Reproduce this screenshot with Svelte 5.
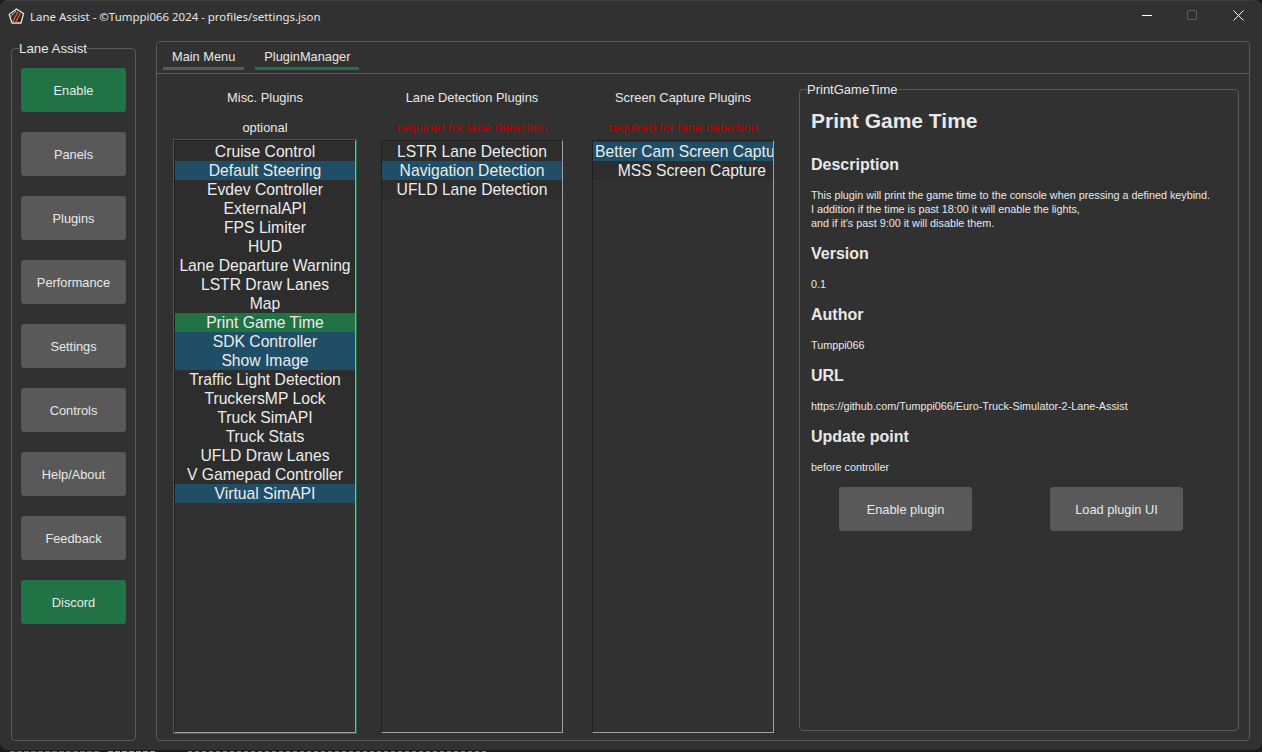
<script>
    const menu = ["Panels", "Plugins", "Performance", "Settings", "Controls", "Help/About", "Feedback"];

    const columns = [
        {
            title: "Misc. Plugins",
            note: "optional",
            focused: true,
            items: [
                ["Cruise Control"], ["Default Steering", "on"], ["Evdev Controller"], ["ExternalAPI"],
                ["FPS Limiter"], ["HUD"], ["Lane Departure Warning"], ["LSTR Draw Lanes"], ["Map"],
                ["Print Game Time", "sel"], ["SDK Controller", "on"], ["Show Image", "on"],
                ["Traffic Light Detection"], ["TruckersMP Lock"], ["Truck SimAPI"], ["Truck Stats"],
                ["UFLD Draw Lanes"], ["V Gamepad Controller"], ["Virtual SimAPI", "on"]
            ]
        },
        {
            title: "Lane Detection Plugins",
            note: "required for lane detection",
            required: true,
            items: [["LSTR Lane Detection"], ["Navigation Detection", "on"], ["UFLD Lane Detection"]]
        },
        {
            title: "Screen Capture Plugins",
            note: "required for lane detection",
            required: true,
            items: [["Better Cam Screen Capture", "on"], ["MSS Screen Capture"]]
        }
    ];

    const info = [
        ["Version", "0.1"],
        ["Author", "Tumppi066"],
        ["URL", "https://github.com/Tumppi066/Euro-Truck-Simulator-2-Lane-Assist"],
        ["Update point", "before controller"]
    ];
</script>

<div class="window">
    <header class="titlebar">
        <svg class="logo" width="17" height="17" viewBox="0 0 17 17">
            <path d="M8.5 1 15.5 5.5 13 15 4 15 1.2 6.5Z" fill="#262626" stroke="#e4e4e4" stroke-width="1.3" />
            <path d="M4.5 14.5 10 3.5M7.5 14.5 12.5 5" stroke="#d4602c" stroke-width="1.4" fill="none" />
            <path d="M2.5 9 8 3" stroke="#bdbdbd" stroke-width="1" fill="none" />
        </svg>
        <span class="title">Lane Assist - ©Tumppi066 2024 - profiles/settings.json</span>
        <div class="controls">
            <span class="min"></span>
            <span class="max"></span>
            <svg class="close" width="11" height="11" viewBox="0 0 11 11">
                <path d="M.5.5 10.5 10.5M10.5.5.5 10.5" stroke="#fff" stroke-width="1" fill="none" />
            </svg>
        </div>
    </header>

    <div class="body">
        <fieldset class="sidebar">
            <legend>Lane Assist</legend>
            <button class="btn green">Enable</button>
            {#each menu as m}
                <button class="btn">{m}</button>
            {/each}
            <button class="btn green">Discord</button>
        </fieldset>

        <section class="notebook">
            <nav class="tabs">
                <div class="tab">Main Menu</div>
                <div class="tab active">PluginManager</div>
            </nav>
            <div class="page">
                {#each columns as col}
                    <div class="column">
                        <div class="col-title">{col.title}</div>
                        <div class="col-note" class:required={col.required}>{col.note}</div>
                        <div class="list" class:focused={col.focused}>
                            <ul>
                                {#each col.items as [label, state]}
                                    <li class={state}>{label}</li>
                                {/each}
                            </ul>
                        </div>
                    </div>
                {/each}

                <fieldset class="details">
                    <legend>PrintGameTime</legend>
                    <h1>Print Game Time</h1>
                    <h2>Description</h2>
                    <p>This plugin will print the game time to the console when pressing a defined keybind.<br />I addition if the time is past 18:00 it will enable the lights,<br />and if it's past 9:00 it will disable them.</p>
                    {#each info as [head, line]}
                        <h2>{head}</h2>
                        <p>{line}</p>
                    {/each}
                    <div class="actions">
                        <button class="btn wide">Enable plugin</button>
                        <button class="btn wide">Load plugin UI</button>
                    </div>
                </fieldset>
            </div>
        </section>
    </div>
</div>

<!-- the terminal behind the window shows through below it -->
<div class="behind">
    <span class="teal"></span>
    <span class="olive"></span>
    <span class="grey"></span>
</div>

<style>
    :global(body) {
        margin: 0;
        background: #1c1c1c;
        overflow: hidden;
    }

    .window {
        box-sizing: border-box;
        width: 1262px;
        height: 750px;
        background: #313131;
        border-top: 1px solid #3e3e3e;
        color: #e8e8e8;
        font-family: "Liberation Sans", Arial, sans-serif;
        display: flex;
        flex-direction: column;
        border-radius: 8px 8px 8px 8px;
    }

    .titlebar {
        height: 30px;
        display: flex;
        align-items: center;
        padding-left: 8px;
        flex: none;
    }

    .title {
        margin-left: 5px;
        font-family: "Noto Sans", sans-serif;
        font-size: 11.45px;
        color: #e6e6e6;
    }

    .controls {
        margin-left: auto;
        display: flex;
        align-items: center;
        padding: 0 18px 2px 0;
    }

    .min {
        width: 10px;
        height: 1px;
        background: #fff;
    }

    .max {
        width: 8px;
        height: 8px;
        border: 1px solid #5e5e5e;
        border-radius: 1px;
        margin-left: 35px;
    }

    .close {
        margin-left: 36px;
    }

    .body {
        flex: 1;
        display: flex;
        padding: 10px 12px 9px 11px;
        gap: 20px;
        min-height: 0;
    }

    fieldset {
        margin: 0;
        min-width: 0;
        border: 1px solid #5a5a5a;
        border-radius: 4px;
        box-sizing: border-box;
    }

    legend {
        padding: 0;
        font-size: 13px;
        line-height: 15px;
    }

    .sidebar {
        width: 125px;
        padding: 12px 9px 0;
        display: flex;
        flex-direction: column;
        gap: 20px;
    }

    .sidebar legend {
        margin-left: -2px;
        font-size: 13.3px;
    }

    .btn {
        height: 44px;
        flex: none;
        border: 0;
        border-radius: 3px;
        background: #595959;
        color: #e8e8e8;
        font: 12.8px "Liberation Sans", Arial, sans-serif;
        padding: 0;
    }

    .green {
        background: #217346;
    }

    .notebook {
        flex: 1;
        min-width: 0;
        border: 1px solid #5a5a5a;
        border-radius: 4px;
        display: flex;
        flex-direction: column;
    }

    .tabs {
        display: flex;
        height: 31px;
        flex: none;
        padding-left: 6px;
        gap: 11px;
        border-bottom: 1px solid #5a5a5a;
    }

    .tab {
        box-sizing: border-box;
        height: 28px;
        padding: 7px 9px 0;
        font-size: 12.8px;
        line-height: 15px;
        border-bottom: 3px solid #595959;
    }

    .active {
        border-bottom-color: #217346;
    }

    .page {
        flex: 1;
        display: flex;
        padding-left: 17px;
        min-height: 0;
    }

    .column {
        width: 182px;
        margin-right: 25px;
        flex: none;
        display: flex;
        flex-direction: column;
        text-align: center;
    }

    .column:nth-child(2) {
        margin-right: 29px;
    }

    .col-title,
    .col-note {
        font-size: 12.9px;
        line-height: 15px;
    }

    .col-title {
        margin-top: 16px;
    }

    .col-note {
        margin-top: 15px;
        margin-bottom: 5px;
    }

    .required {
        color: #c00000;
    }

    .list {
        margin: 0 0 7px;
        padding: 1px 0 0;
        flex: 1;
        overflow: hidden;
        border: 1px solid;
        border-color: #1f1f1f #a0a0a0 #a0a0a0 #1f1f1f;
        font-size: 15.7px;
        box-sizing: border-box;
    }

    .focused {
        outline: 1px solid #217346;
    }

    ul {
        list-style: none;
        margin: 0;
        padding: 0;
        width: max-content;
        min-width: 100%;
    }

    li {
        height: 19px;
        line-height: 19px;
        padding: 0 2px;
        white-space: nowrap;
        color: #ececec;
        background: #2d2d2d;
    }

    li.on {
        background: #1f4e66;
    }

    li.sel {
        background: #217346;
    }

    .details {
        width: 440px;
        height: 649px;
        margin: 8px 0 0 0;
        padding: 0 11px;
    }

    .details legend {
        margin-left: -4px;
    }

    h1 {
        margin: 12px 0 22px;
        font-size: 21px;
        line-height: 24px;
    }

    h2 {
        margin: 14px 0 13px;
        font-size: 16px;
        line-height: 20px;
    }

    p {
        margin: 0;
        font-size: 10.8px;
        line-height: 14px;
    }

    .actions {
        display: flex;
        gap: 78px;
        padding: 13px 0 0 28px;
    }

    .wide {
        width: 133px;
    }

    .behind {
        height: 2px;
        display: flex;
        padding: 1px 0 0 10px;
        box-sizing: border-box;
    }

    .behind span {
        height: 1px;
        background-size: 7px 1px;
    }

    .teal {
        width: 90px;
        background-image: linear-gradient(90deg, #3f8a72 70%, transparent 70%);
    }

    .olive {
        width: 49px;
        margin-left: 8px;
        background-image: linear-gradient(90deg, #a5a04f 70%, transparent 70%);
    }

    .grey {
        width: 300px;
        margin-left: 31px;
        background-image: linear-gradient(90deg, #7d7d7d 60%, transparent 60%);
    }
</style>
